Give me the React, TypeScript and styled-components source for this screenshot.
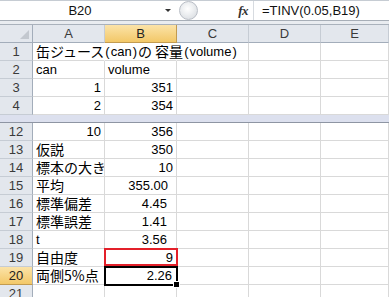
import React from 'react';
import styled, { createGlobalStyle, css } from 'styled-components';

const GlobalStyle = createGlobalStyle`
  html, body { margin: 0; padding: 0; background: #fff; overflow: hidden; }
  body { font-family: "Liberation Sans", "Noto Sans CJK JP", sans-serif; }
`;

const Sheet = styled.div`
  width: 389px;
  height: 297px;
  overflow: hidden;
  display: flex;
  flex-direction: column;
  background: #fff;
`;

const FormulaArea = styled.div`
  height: 25px;
  box-sizing: border-box;
  background: #e9ecf0;
  border-bottom: 1px solid #a9b1bb;
  flex-shrink: 0;
`;

const FormulaRow = styled.div`
  height: 21px;
  box-sizing: border-box;
  display: flex;
  background: #fff;
  border-top: 1px solid #c6ccd3;
  border-bottom: 1px solid #a7aeb7;
`;

const NameBox = styled.div`
  width: 179px;
  display: flex;
  align-items: center;
  font-size: 13px;
  color: #111;
`;

const NameText = styled.div`
  width: 160px;
  text-align: center;
`;

const Arrow = styled.div`
  width: 0;
  height: 0;
  border-left: 3px solid transparent;
  border-right: 3px solid transparent;
  border-top: 3px solid #333;
  margin-left: 5px;
`;

const Knob = styled.div`
  width: 19px;
  height: 19px;
  border-radius: 50%;
  box-sizing: border-box;
  border: 1px solid #b9bec6;
  background: radial-gradient(circle at 45% 40%, #ffffff 0%, #eef0f2 40%, #d3d7dc 100%);
  flex-shrink: 0;
`;

const FxZone = styled.div`
  width: 56px;
  display: flex;
  align-items: center;
  justify-content: flex-end;
  padding-right: 5px;
  box-sizing: border-box;
  border-right: 1px solid #d7dbe0;
`;

const Fx = styled.span`
  font-family: "Liberation Serif", "DejaVu Serif", serif;
  font-style: italic;
  font-weight: bold;
  font-size: 13px;
  color: #333;
  letter-spacing: -0.5px;
`;

const FormulaText = styled.div`
  flex: 1;
  display: flex;
  align-items: center;
  padding-left: 8px;
  font-size: 13px;
  color: #111;
`;

const Row = styled.div`
  display: grid;
  grid-template-columns: 33px 72px 72px 72px 72px 1fr;
  height: 18px;
  flex-shrink: 0;
`;

const activeHead = css`
  background: linear-gradient(#fbe3a8, #f3c868);
  color: #222;
`;

const Corner = styled.div`
  box-sizing: border-box;
  background: #e3e7ed;
  border-right: 1px solid #a3adba;
  border-bottom: 1px solid #a3adba;
  position: relative;
  &::after {
    content: '';
    position: absolute;
    right: 3px;
    bottom: 3px;
    width: 0;
    height: 0;
    border-left: 9px solid transparent;
    border-bottom: 9px solid #c3c8cf;
  }
`;

const ColHead = styled.div<{ $active?: boolean }>`
  box-sizing: border-box;
  background: #e3e7ed;
  border-right: 1px solid #c6ccd4;
  border-bottom: 1px solid #a3adba;
  display: flex;
  align-items: center;
  justify-content: center;
  font-size: 13px;
  color: #3a3a3a;
  ${p => p.$active && activeHead}
  ${p => p.$active && css`border-bottom-color: #c29b50; border-right-color: #c29b50;`}
`;

const RowHead = styled.div<{ $active?: boolean }>`
  box-sizing: border-box;
  background: #e3e7ed;
  border-right: 1px solid #a3adba;
  border-bottom: 1px solid #c6ccd4;
  display: flex;
  align-items: flex-end;
  justify-content: center;
  padding-bottom: 1px;
  font-size: 13px;
  line-height: 15px;
  color: #3a3a3a;
  ${p => p.$active && activeHead}
  ${p => p.$active && css`border-bottom-color: #c29b50;`}
`;

const Cell = styled.div<{ $num?: boolean; $pad?: number; $open?: boolean; $marked?: boolean }>`
  box-sizing: border-box;
  position: relative;
  border-right: 1px solid ${p => (p.$open ? 'transparent' : '#d9d9d9')};
  border-bottom: 1px solid #d9d9d9;
  display: flex;
  align-items: flex-end;
  justify-content: ${p => (p.$num ? 'flex-end' : 'flex-start')};
  padding: 0 ${p => 3 + (p.$pad ?? 0)}px 1px 3px;
  font-size: 13px;
  line-height: 15px;
  color: #000;
  white-space: nowrap;
  overflow: ${p => (p.$open || p.$marked ? 'visible' : 'hidden')};
  z-index: ${p => (p.$marked ? 3 : p.$open ? 2 : 1)};
`;

const Ja = styled.span`
  font-family: "Noto Sans CJK JP", sans-serif;
  font-size: 14px;
  line-height: 15px;
`;

const Paren = styled.span`
  padding: 0 1px;
`;

const Divider = styled.div`
  height: 8px;
  box-sizing: border-box;
  background: #dce0ee;
  border-bottom: 1px solid #8e95a3;
  flex-shrink: 0;
`;

const Mark = styled.div<{ $kind: 'red' | 'sel' }>`
  position: absolute;
  pointer-events: none;
  box-sizing: border-box;
  ${p =>
    p.$kind === 'red'
      ? css`top: -1px; left: -1px; right: -2px; bottom: 0px; border: 2px solid #e3202a;`
      : css`top: -1px; left: -1px; right: -2px; bottom: -2px; border: 2px solid #000;`}
`;

const Handle = styled.div`
  position: absolute;
  right: -4px;
  bottom: -4px;
  width: 5px;
  height: 5px;
  background: #000;
  border: 1px solid #fff;
`;

type RowData = {
  n: string;
  a?: React.ReactNode;
  aNum?: boolean;
  b?: string;
  bText?: boolean;
  pad?: number;
  mark?: 'red' | 'sel';
  span?: boolean;
};

const top: RowData[] = [
  {
    n: '1',
    a: (
      <>
        <Ja>缶ジュース</Ja>
        <Paren>(</Paren>can<Paren>)</Paren>
        <Ja>の 容量</Ja>
        <Paren>(</Paren>volume<Paren>)</Paren>
      </>
    ),
    span: true,
  },
  { n: '2', a: 'can', b: 'volume', bText: true },
  { n: '3', a: '1', aNum: true, b: '351' },
  { n: '4', a: '2', aNum: true, b: '354' },
];

const bottom: RowData[] = [
  { n: '12', a: '10', aNum: true, b: '356' },
  { n: '13', a: <Ja>仮説</Ja>, b: '350' },
  { n: '14', a: <Ja>標本の大きさ</Ja>, b: '10' },
  { n: '15', a: <Ja>平均</Ja>, b: '355.00', pad: 5 },
  { n: '16', a: <Ja>標準偏差</Ja>, b: '4.45', pad: 6 },
  { n: '17', a: <Ja>標準誤差</Ja>, b: '1.41', pad: 6 },
  { n: '18', a: 't', b: '3.56', pad: 6 },
  { n: '19', a: <Ja>自由度</Ja>, b: '9', mark: 'red' },
  { n: '20', a: <Ja>両側5%点</Ja>, b: '2.26', mark: 'sel', pad: 1 },
  { n: '21' },
];

const SheetRow = ({ r }: { r: RowData }) => (
  <Row>
    <RowHead $active={r.n === '20'}>{r.n}</RowHead>
    <Cell $num={r.aNum} $open={r.span}>{r.a}</Cell>
    <Cell $num={!r.bText} $pad={r.pad} $open={r.span} $marked={!!r.mark}>
      {r.b}
      {r.mark && <Mark $kind={r.mark}>{r.mark === 'sel' && <Handle />}</Mark>}
    </Cell>
    <Cell />
    <Cell />
    <Cell />
  </Row>
);

export default function App() {
  return (
    <>
      <GlobalStyle />
      <Sheet>
        <FormulaArea>
          <FormulaRow>
            <NameBox>
              <NameText>B20</NameText>
              <Arrow />
            </NameBox>
            <Knob />
            <FxZone>
              <Fx>fx</Fx>
            </FxZone>
            <FormulaText>=TINV(0.05,B19)</FormulaText>
          </FormulaRow>
        </FormulaArea>
        <Row>
          <Corner />
          <ColHead>A</ColHead>
          <ColHead $active>B</ColHead>
          <ColHead>C</ColHead>
          <ColHead>D</ColHead>
          <ColHead>E</ColHead>
        </Row>
        {top.map(r => (
          <SheetRow key={r.n} r={r} />
        ))}
        <Divider />
        {bottom.map(r => (
          <SheetRow key={r.n} r={r} />
        ))}
      </Sheet>
    </>
  );
}
